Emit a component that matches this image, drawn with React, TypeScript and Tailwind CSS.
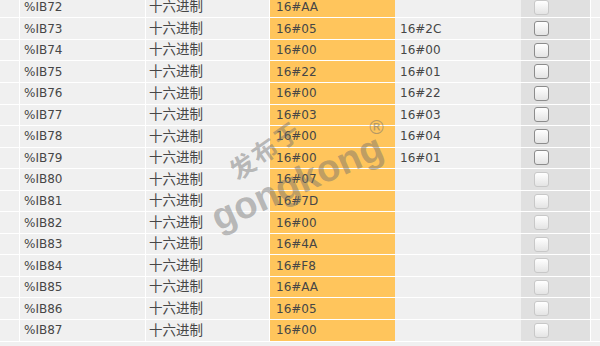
import React from "react";

const rows: [string, string, string, boolean][] = [
  ["%IB72", "16#AA", "", false],
  ["%IB73", "16#05", "16#2C", true],
  ["%IB74", "16#00", "16#00", true],
  ["%IB75", "16#22", "16#01", true],
  ["%IB76", "16#00", "16#22", true],
  ["%IB77", "16#03", "16#03", true],
  ["%IB78", "16#00", "16#04", true],
  ["%IB79", "16#00", "16#01", true],
  ["%IB80", "16#07", "", false],
  ["%IB81", "16#7D", "", false],
  ["%IB82", "16#00", "", false],
  ["%IB83", "16#4A", "", false],
  ["%IB84", "16#F8", "", false],
  ["%IB85", "16#AA", "", false],
  ["%IB86", "16#05", "", false],
  ["%IB87", "16#00", "", false],
];

function Checkbox({ active }: { active: boolean }) {
  return (
    <div
      className={
        "w-[15px] h-[15px] rounded-[3px] border bg-gradient-to-b from-white to-[#e4e4e4] " +
        (active ? "border-[#8c8c8c]" : "border-[#c8c8c8]")
      }
    />
  );
}

export default function App() {
  return (
    <div
      className="relative w-[600px] h-[346px] overflow-hidden bg-[#f0f0f0] text-[#464646]"
      style={{ fontFamily: '"DejaVu Sans", "Noto Sans CJK SC", sans-serif' }}
    >
      <div className="flex flex-col mt-[-3.2px]">
        {rows.map(([addr, val, mod, active]) => (
          <div
            key={addr}
            className="flex h-[21.56px] border-b border-white text-[12px] leading-none"
          >
            <div className="w-[20px] border-r border-white" />
            <div className="w-[126px] border-r border-white flex items-center pl-[4px]">
              {addr}
            </div>
            <div className="w-[124px] border-r border-white flex items-center pl-[3px] text-[13.5px]">
              十六进制
            </div>
            <div className="w-[125px] bg-[#ffc55c] flex items-center pl-[6px]">
              {val}
            </div>
            <div className="w-[126px] flex items-center pl-[5px]">{mod}</div>
            <div className="w-[70px] bg-[#e0e0e0] border-r border-white flex items-center pl-[13px]">
              <Checkbox active={active} />
            </div>
            <div className="flex-1" />
          </div>
        ))}
      </div>

      <div
        className="pointer-events-none absolute left-[224px] top-[130px] -rotate-[35deg] text-[25px] leading-[38px] font-bold text-[rgba(110,110,110,0.45)] tracking-[2px]"
        style={{ fontFamily: '"Noto Sans CJK SC", sans-serif' }}
      >
        发布于
      </div>
      <div
        className="pointer-events-none absolute left-[205px] top-[160px] -rotate-[24deg] text-[38px] leading-[44px] font-bold text-[rgba(110,110,110,0.45)]"
        style={{ fontFamily: '"Liberation Sans", Arial, sans-serif' }}
      >
        gongkong
      </div>
      <div
        className="pointer-events-none absolute left-[367px] top-[113px] text-[19px] text-[rgba(110,110,110,0.5)]"
        style={{ fontFamily: '"DejaVu Sans", sans-serif' }}
      >
        ®
      </div>
    </div>
  );
}
